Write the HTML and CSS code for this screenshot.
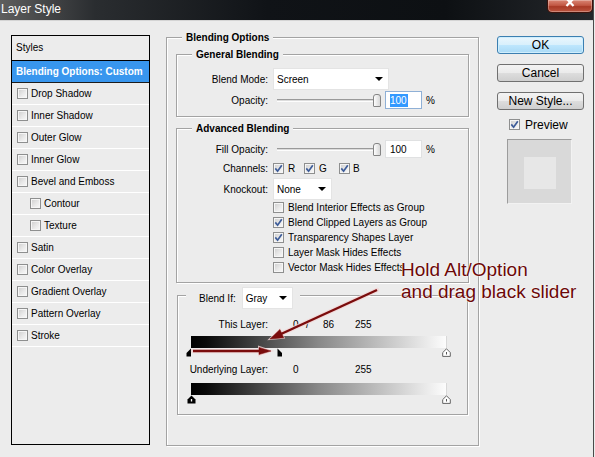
FILE: index.html
```html
<!DOCTYPE html>
<html>
<head>
<meta charset="utf-8">
<title>Layer Style</title>
<link rel="stylesheet" href="styles.css">
</head>
<body>
<div class="window">
  <div class="titlebar">
    <span class="title">Layer Style</span>
    <span class="close"><svg width="12" height="8" viewBox="0 0 12 8"><path d="M2.5 -1.5 L9.5 6 M9.5 -1.5 L2.5 6" stroke="#fff" stroke-width="2.2" fill="none"/></svg></span>
  </div>
  <div class="main">
    <div class="styles">
      <div class="styles-head">Styles</div>
      <div class="srow sel">Blending Options: Custom</div>
      <div class="srow"><span class="cb"></span>Drop Shadow</div>
      <div class="srow"><span class="cb"></span>Inner Shadow</div>
      <div class="srow"><span class="cb"></span>Outer Glow</div>
      <div class="srow"><span class="cb"></span>Inner Glow</div>
      <div class="srow"><span class="cb"></span>Bevel and Emboss</div>
      <div class="srow sub"><span class="cb"></span>Contour</div>
      <div class="srow sub"><span class="cb"></span>Texture</div>
      <div class="srow"><span class="cb"></span>Satin</div>
      <div class="srow"><span class="cb"></span>Color Overlay</div>
      <div class="srow"><span class="cb"></span>Gradient Overlay</div>
      <div class="srow"><span class="cb"></span>Pattern Overlay</div>
      <div class="srow"><span class="cb"></span>Stroke</div>
    </div>

    <div class="group outer">
      <div class="legend">Blending Options</div>

      <div class="group general">
        <div class="legend">General Blending</div>
        <div class="frow r-mode">
          <span class="flabel">Blend Mode:</span>
          <div class="select sel-mode"><span class="stext">Screen</span><i class="arrow"></i></div>
        </div>
        <div class="frow r-op">
          <span class="flabel">Opacity:</span>
          <div class="slider"><div class="track"></div><div class="thumb"></div></div>
          <div class="num focus"><span class="hl">100</span></div>
          <span class="pct">%</span>
        </div>
      </div>

      <div class="group advanced">
        <div class="legend">Advanced Blending</div>
        <div class="frow r-fill">
          <span class="flabel">Fill Opacity:</span>
          <div class="slider"><div class="track"></div><div class="thumb"></div></div>
          <div class="num"><span>100</span></div>
          <span class="pct">%</span>
        </div>
        <div class="frow r-ch">
          <span class="flabel">Channels:</span>
          <div class="ch ch-r"><span class="cb on"><svg width="9" height="9" viewBox="0 0 9 9"><path d="M1.3 4.4 L3.6 7.2 L7.8 1.2" stroke="#3d5c99" stroke-width="1.7" fill="none"/></svg></span><span class="chl">R</span></div>
          <div class="ch ch-g"><span class="cb on"><svg width="9" height="9" viewBox="0 0 9 9"><path d="M1.3 4.4 L3.6 7.2 L7.8 1.2" stroke="#3d5c99" stroke-width="1.7" fill="none"/></svg></span><span class="chl">G</span></div>
          <div class="ch"><span class="cb on"><svg width="9" height="9" viewBox="0 0 9 9"><path d="M1.3 4.4 L3.6 7.2 L7.8 1.2" stroke="#3d5c99" stroke-width="1.7" fill="none"/></svg></span><span class="chl chb">B</span></div>
        </div>
        <div class="frow r-ko">
          <span class="flabel">Knockout:</span>
          <div class="select sel-ko"><span class="stext">None</span><i class="arrow"></i></div>
        </div>
        <div class="checks">
          <div class="crow"><span class="cb"></span>Blend Interior Effects as Group</div>
          <div class="crow"><span class="cb on"><svg width="9" height="9" viewBox="0 0 9 9"><path d="M1.3 4.4 L3.6 7.2 L7.8 1.2" stroke="#3d5c99" stroke-width="1.7" fill="none"/></svg></span>Blend Clipped Layers as Group</div>
          <div class="crow"><span class="cb on"><svg width="9" height="9" viewBox="0 0 9 9"><path d="M1.3 4.4 L3.6 7.2 L7.8 1.2" stroke="#3d5c99" stroke-width="1.7" fill="none"/></svg></span>Transparency Shapes Layer</div>
          <div class="crow"><span class="cb"></span>Layer Mask Hides Effects</div>
          <div class="crow"><span class="cb"></span>Vector Mask Hides Effects</div>
        </div>
      </div>

      <div class="group blendif">
        <div class="legend bl">
          <span>Blend If:</span>
          <div class="select sel-gray"><span class="stext">Gray</span><i class="arrow"></i></div>
        </div>
        <div class="vrow r-this">
          <span class="vlabel">This Layer:</span>
          <span class="v v1">0</span><span class="v v2">/</span><span class="v v3">86</span><span class="v">255</span>
        </div>
        <div class="bar"></div>
        <div class="marks">
          <svg class="mk mk-l" style="left:0px" width="6" height="9" viewBox="0 0 6 9"><path d="M5 0.5 V8.5 H0.5 V5 Z" fill="#000"/></svg>
          <svg class="mk mk-r" style="left:86px" width="6" height="9" viewBox="0 0 6 9"><path d="M0.5 0.5 L5 5 V8.5 H0.5 Z" fill="#000"/></svg>
          <svg class="mk mk-f" style="left:255px" width="9" height="9" viewBox="0 0 9 9"><path d="M4.5 0.8 L8.3 4.6 V8.4 H0.7 V4.6 Z" fill="#fff" stroke="#555" stroke-width="0.9"/><path d="M4.5 4 V6.5" stroke="#555" stroke-width="1"/></svg>
        </div>
        <div class="vrow r-under">
          <span class="vlabel">Underlying Layer:</span>
          <span class="v v1u">0</span><span class="v">255</span>
        </div>
        <div class="bar bar2"></div>
        <div class="marks">
          <svg class="mk mk-f" style="left:0px" width="9" height="9" viewBox="0 0 9 9"><path d="M4.5 0.5 L8.5 4.5 V8.5 H0.5 V4.5 Z" fill="#000"/><path d="M4.5 4 V6.5" stroke="#fff" stroke-width="1.3"/></svg>
          <svg class="mk mk-f" style="left:255px" width="9" height="9" viewBox="0 0 9 9"><path d="M4.5 0.8 L8.3 4.6 V8.4 H0.7 V4.6 Z" fill="#fff" stroke="#555" stroke-width="0.9"/><path d="M4.5 4 V6.5" stroke="#555" stroke-width="1"/></svg>
        </div>
      </div>
    </div>

    <div class="side">
      <div class="btn ok">OK</div>
      <div class="btn">Cancel</div>
      <div class="btn">New Style...</div>
      <div class="prev"><span class="cb on"><svg width="9" height="9" viewBox="0 0 9 9"><path d="M1.3 4.4 L3.6 7.2 L7.8 1.2" stroke="#3d5c99" stroke-width="1.7" fill="none"/></svg></span>Preview</div>
      <div class="pbox"><div class="pinner"></div></div>
    </div>
  </div>
</div>

<svg class="arrows" width="595" height="457" viewBox="0 0 595 457">
  <g stroke="#f3d6d6" stroke-width="4.5" stroke-linecap="round" fill="#f3d6d6" opacity="0.8">
    <line x1="377" y1="290" x2="281" y2="334"/>
    <polygon points="270,339 283.7,337.7 279.9,329.5" stroke-width="2"/>
    <line x1="193" y1="351" x2="260" y2="351"/>
    <polygon points="271,351 259,347 259,355" stroke-width="2"/>
  </g>
  <g stroke="#7a0c0c" stroke-width="2.4" fill="#7a0c0c">
    <line x1="377" y1="290" x2="281" y2="334"/>
    <polygon points="270,339 283.7,337.7 279.9,329.5" stroke-width="0.5"/>
    <line x1="193" y1="351" x2="260" y2="351"/>
    <polygon points="271,351 259,347.5 259,354.5" stroke-width="0.5"/>
  </g>
</svg>
<div class="note">Hold Alt/Option<br>and drag black slider</div>
</body>
</html>
```

FILE: styles.css
```css
* { box-sizing: border-box; }
html, body { margin: 0; padding: 0; }
body {
  width: 595px;
  height: 457px;
  overflow: hidden;
  position: relative;
  background: #ececec;
  font-family: "Liberation Sans", Arial, sans-serif;
  font-size: 10px;
  color: #000;
}
.window {
  width: 594px;
  height: 457px;
  border-right: 1px solid #4a4a4a;
}

/* title bar */
.titlebar {
  height: 21px;
  display: flex;
  align-items: flex-start;
  background: linear-gradient(90deg, #5e5e5e 0, #2a2d30 16%, #101317 45%, #0d1013 75%, #24272b 100%);
  border-bottom: 1px solid #d4d4d4;
}
.title {
  color: #fff;
  font-size: 12px;
  line-height: 16px;
  padding: 1px 0 0 1px;
}
.close {
  margin-left: auto;
  width: 46px;
  height: 13px;
  border: 1px solid #3d120b;
  border-top: none;
  border-radius: 0 0 5px 5px;
  background: linear-gradient(#d98573, #c25844 45%, #a93a26 55%, #bb5540);
  box-shadow: inset 0 0 0 1px rgba(255, 255, 255, .3);
  display: flex;
  justify-content: center;
  align-items: flex-start;
}

/* main area */
.main {
  display: flex;
  align-items: flex-start;
  padding: 14px 0 0 11px;
}

/* styles list */
.styles {
  flex: none;
  width: 139px;
  height: 410px;
  border: 1px solid #000;
}
.styles-head {
  height: 25px;
  line-height: 24px;
  padding-left: 4px;
  border-bottom: 1px solid #000;
}
.srow {
  height: 22px;
  display: flex;
  align-items: center;
  padding-left: 5px;
  border-bottom: 1px solid #fff;
  white-space: nowrap;
}
.srow .cb { margin-right: 3px; }
.srow.sub { padding-left: 18px; }
.srow.sel {
  height: 22px;
  padding-left: 4px;
  background: #3896ee;
  color: #fff;
  font-weight: bold;
  font-size: 10px;
  border-bottom: 1px solid #1c1c1c;
}

/* checkboxes */
.cb {
  flex: none;
  width: 11px;
  height: 11px;
  border: 1px solid #8e8f8f;
  background: linear-gradient(135deg, #cdcdcd 0, #e9e9e9 55%, #fafafa 100%);
  box-shadow: inset 0 0 0 1px #f6f6f6;
  display: flex;
  align-items: center;
  justify-content: center;
}
.cb svg { display: block; }

/* group boxes */
.group {
  border: 1px solid #a3a3a3;
  box-shadow: inset 1px 1px 0 #fff, 1px 1px 0 #fff;
}
.legend {
  display: table;
  height: 13px;
  line-height: 13px;
  margin: -7px 0 0 15px;
  padding: 0 4px;
  background: #ececec;
  font-weight: bold;
  font-size: 10px;
  white-space: nowrap;
}
.outer {
  flex: none;
  width: 313px;
  height: 409px;
  margin: 2px 0 0 16px;
}
.general {
  margin: 10px 9px 0;
  padding-bottom: 7px;
}
.advanced {
  margin: 11px 9px 0;
  padding-bottom: 7px;
}
.blendif {
  margin: 12px 10px 0;
  padding-bottom: 10px;
}

/* form rows */
.frow {
  display: flex;
  align-items: center;
  white-space: nowrap;
}
.flabel {
  flex: none;
  width: 91px;
  margin-right: 5px;
  text-align: right;
}
.r-mode { height: 22px; margin-top: 7px; }
.r-op { height: 18px; margin-top: 1px; }
.r-fill { height: 18px; margin-top: 5px; }
.r-ch { height: 17px; margin-top: 2px; }
.r-ko { height: 22px; margin-top: 1px; }

.select {
  display: flex;
  align-items: center;
  height: 22px;
  background: #fff;
  border: 1px solid #e4e4e4;
  padding: 0 5px 0 3px;
}
.stext { flex: 1; }
.arrow {
  width: 0;
  height: 0;
  border-left: 4px solid transparent;
  border-right: 4px solid transparent;
  border-top: 4px solid #000;
}
.sel-mode { width: 116px; }
.sel-ko { width: 59px; }
.sel-gray { width: 51px; margin-left: 6px; }

.slider {
  flex: none;
  display: flex;
  align-items: center;
  width: 104px;
  height: 13px;
  margin-left: 4px;
}
.track {
  flex: 1;
  height: 3px;
  border-top: 1px solid #9a9a9a;
  border-bottom: 1px solid #fdfdfd;
  background: #dcdcdc;
}
.thumb {
  width: 8px;
  height: 13px;
  border: 1px solid #858585;
  border-radius: 3px 3px 1px 1px;
  background: linear-gradient(90deg, #fdfdfd, #d8d8d8);
}
.num {
  flex: none;
  display: flex;
  align-items: center;
  width: 37px;
  height: 18px;
  margin-left: 4px;
  padding-left: 4px;
  background: #fff;
  border: 1px solid #e0e1e2;
}
.num.focus { border-color: #8fb0d6; }
.hl {
  background: #3399ff;
  color: #fff;
  line-height: 13px;
  padding-right: 1px;
}
.pct { margin-left: 4px; }

.ch {
  display: flex;
  align-items: center;
}
.ch-r { width: 31px; }
.ch-g { width: 35px; }
.chl { margin-left: 4px; }
.chb { margin-left: 3px; }

.checks { margin: 0 0 0 96px; }
.crow {
  height: 15px;
  display: flex;
  align-items: center;
  white-space: nowrap;
}
.crow .cb { margin-right: 4px; }

/* blend if */
.legend.bl {
  display: flex;
  align-items: center;
  width: max-content;
  height: 22px;
  margin: -9px 0 0 8px;
  padding: 0 7px 0 13px;
  font-weight: normal;
  font-size: 10px;
}
.vrow {
  display: flex;
  align-items: center;
  height: 14px;
  white-space: nowrap;
}
.r-this { margin-top: 8px; }
.r-under { margin-top: 5px; }
.vlabel {
  flex: none;
  width: 90px;
  text-align: right;
  margin-right: 25px;
}
.v { flex: none; }
.v1 { width: 13px; }
.v2 { width: 17px; }
.v3 { width: 32px; }
.v1u { width: 62px; }
.bar {
  width: 256px;
  height: 12px;
  margin: 5px 0 0 13px;
  background: linear-gradient(90deg, #000 0, #0a0a0a 6%, #888 50%, #fcfcfc 100%);
  border-right: 1px solid #d8d8d8;
}
.bar2 { margin-top: 7px; }
.marks {
  position: relative;
  width: 256px;
  height: 9px;
  margin-left: 13px;
}
.mk { position: absolute; top: 0; display: block; }
.mk-l { margin-left: -5px; }
.mk-r { margin-left: 0; }
.mk-f { margin-left: -4px; }

/* right column */
.side {
  flex: none;
  width: 87px;
  margin-left: 18px;
  display: flex;
  flex-direction: column;
}
.btn {
  height: 18px;
  margin-top: 10px;
  border: 1px solid #707070;
  border-radius: 3px;
  background: linear-gradient(#f3f3f3 0, #ebebeb 48%, #dddddd 52%, #cfcfcf 100%);
  text-align: center;
  font-size: 12px;
  line-height: 16px;
}
.btn.ok {
  margin-top: 1px;
  border-color: #3c7fb1;
  background: linear-gradient(#eaf6fd 0, #d9f0fc 48%, #bee6fd 52%, #a9daf6 100%);
  box-shadow: inset 0 0 0 1px #cfeefd;
}
.prev {
  display: flex;
  align-items: center;
  height: 15px;
  margin-top: 7px;
  padding-left: 12px;
  font-size: 12px;
}
.prev .cb { margin-right: 5px; }
.pbox {
  width: 65px;
  height: 65px;
  margin: 7px 0 0 10px;
  background: #d9d9d9;
  border-top: 1px solid #9c9c9c;
  border-left: 1px solid #9c9c9c;
  border-right: 1px solid #f2f2f2;
  border-bottom: 1px solid #f2f2f2;
  display: flex;
  align-items: center;
  justify-content: center;
}
.pinner {
  width: 32px;
  height: 32px;
  margin-top: 2px;
  background: #e7e7e7;
}

/* annotation overlay */
.arrows {
  position: absolute;
  left: 0;
  top: 0;
  pointer-events: none;
}
.note {
  position: absolute;
  left: 401px;
  top: 259px;
  font-family: "Liberation Sans", Arial, sans-serif;
  font-size: 19px;
  line-height: 22px;
  color: #6c0808;
  white-space: nowrap;
  text-shadow: 0 0 1px #fff, 0 0 2px #fff;
}
```
